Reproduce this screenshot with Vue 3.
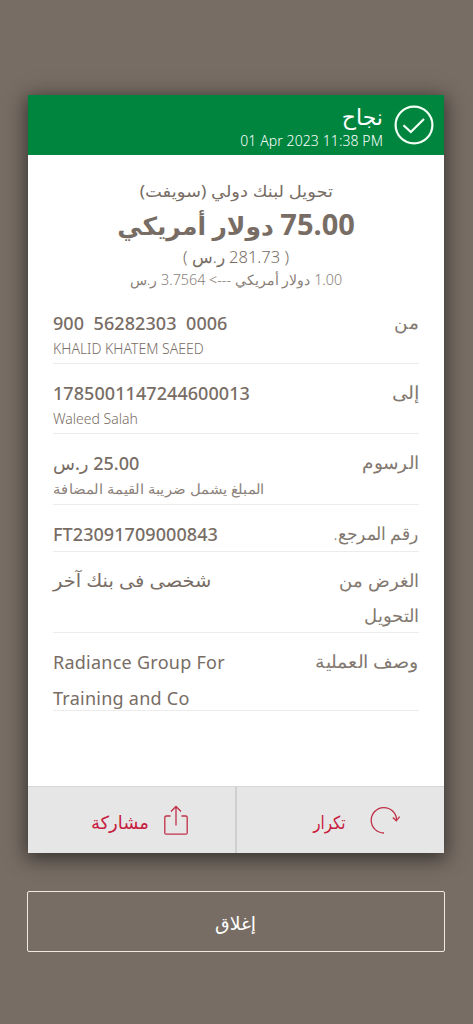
<script setup>
const rows = [
  { id: 'from', label: ['من'], value: ['900  56282303  0006'], note: 'KHALID KHATEM SAEED', ltr: true, noteLtr: true },
  { id: 'to', label: ['إلى'], value: ['1785001147244600013'], note: 'Waleed Salah', ltr: true, noteLtr: true },
  { id: 'fees', label: ['الرسوم'], value: ['25.00 ر.س'], note: 'المبلغ يشمل ضريبة القيمة المضافة' },
  { id: 'ref', label: ['رقم المرجع.'], value: ['FT23091709000843'], ltr: true },
  { id: 'purpose', label: ['الغرض من', 'التحويل'], value: ['شخصى فى بنك آخر'] },
  { id: 'desc', label: ['وصف العملية'], value: ['Radiance Group For', 'Training and Co'], ltr: true },
]
</script>

<template>
  <main class="screen" dir="rtl">
    <section class="card">
      <header class="head">
        <svg class="tick" viewBox="0 0 40 40">
          <circle cx="20" cy="20" r="18.4" />
          <path d="M9.5 20.3 16.8 27 30 14" />
        </svg>
        <div class="head-text">
          <div class="status"><span>نجاح</span></div>
          <div class="date" dir="ltr"><span>01 Apr 2023 11:38 PM</span></div>
        </div>
      </header>

      <div class="body">
        <div class="summary">
          <div class="kind"><span>تحويل لبنك دولي (سويفت)</span></div>
          <div class="amount"><span class="figure">75.00</span><span class="currency"> دولار أمريكي</span></div>
          <div class="local"><span>( 281.73 ر.س )</span></div>
          <div class="rate"><span>1.00 دولار أمريكي ---&gt; 3.7564 ر.س</span></div>
        </div>

        <div v-for="r in rows" :key="r.id" class="row" :class="r.id">
          <div class="label">
            <div v-for="l in r.label" :key="l"><span>{{ l }}</span></div>
          </div>
          <div class="data">
            <div v-for="v in r.value" :key="v" class="value" :dir="r.ltr ? 'ltr' : 'rtl'"><span>{{ v }}</span></div>
            <div v-if="r.note" class="note" :dir="r.noteLtr ? 'ltr' : 'rtl'"><span>{{ r.note }}</span></div>
          </div>
        </div>
      </div>

      <footer class="actions">
        <button class="action repeat">
          <svg class="icon-repeat" viewBox="0 0 32 32">
            <path d="M15 29A12.7 12.7 0 1 1 27.6 15.8" />
            <path d="M23.8 13.5 27.3 16.8 30.6 12.7" />
          </svg>
          <span>تكرار</span>
        </button>
        <button class="action share">
          <svg class="icon-share" viewBox="0 0 26 32">
            <path d="M7.5 12H3.2Q1.8 12 1.8 13.5V28.7Q1.8 30.2 3.2 30.2H22.8Q24.2 30.2 24.2 28.7V13.5Q24.2 12 22.8 12H18.5" />
            <path d="M13 21.5V2.5M8 7.5 13 2.5 18 7.5" />
          </svg>
          <span>مشاركة</span>
        </button>
      </footer>
    </section>

    <button class="close"><span>إغلاق</span></button>
  </main>
</template>

<style>
body { margin: 0; background: #786d64; }
</style>

<style scoped>
.screen {
  box-sizing: border-box;
  height: 1024px;
  padding: 95px 29px 0 28px;
  background: #786d64;
  color: #786d65;
  font-family: "Noto Sans", "DejaVu Sans", sans-serif;
  overflow: hidden;
}
span { display: inline-block; white-space: pre; }
button { margin: 0; padding: 0; font-family: inherit; }
.card {
  display: flex;
  flex-direction: column;
  height: 758px;
  background: #fff;
  box-shadow: 0 4px 18px 2px rgba(20, 20, 20, 0.65);
}
.head {
  display: flex;
  align-items: center;
  gap: 11px;
  height: 60px;
  box-sizing: border-box;
  padding-right: 10px;
  background: #00853f;
  color: #fff;
}
.tick { width: 40px; height: 40px; fill: none; stroke: #f2fff4; stroke-width: 2.2; }
.status { height: 29px; line-height: 33px; font-size: 22px; }
.date { height: 22px; line-height: 23px; font-size: 14px; font-weight: 350; letter-spacing: 0.1px; }
.body { flex: 1; padding: 0 25px; }
.summary { height: 139px; box-sizing: border-box; padding-top: 21px; text-align: center; }
.summary div { white-space: nowrap; }
.kind { height: 29px; line-height: 30px; font-size: 16px; }
.kind span { transform: scaleX(1.12); }
.amount { height: 40px; line-height: 38px; font-weight: 700; }
.figure { font-size: 29px; }
.currency { font-size: 25px; }
.local { height: 24px; line-height: 24px; font-size: 16.5px; font-weight: 350; }
.rate { height: 22px; line-height: 22px; font-size: 14.3px; font-weight: 350; color: #887e77; }
.row {
  display: flex;
  justify-content: space-between;
  box-sizing: border-box;
  height: 70px;
  padding-top: 11px;
  border-bottom: 1px solid #ececec;
}
.row.fees { height: 71px; }
.row.ref { height: 47px; }
.row.purpose { height: 81px; }
.row.desc { height: 78px; }
.label { font-size: 17.5px; line-height: 35px; font-weight: 300; color: #82786f; }
.label span { transform: scaleX(1.03); transform-origin: right; }
.to .label span { transform: scaleX(1.1); }
.ref .label span { transform: scaleX(0.95); }
.purpose .label span { transform: scaleX(1); }
.desc .label span { transform: scaleX(1.06); }
.data { text-align: left; }
.value { height: 35px; line-height: 36px; font-size: 18px; font-weight: 500; letter-spacing: 0.07px; }
.value[dir="rtl"] { letter-spacing: 0; }
.purpose .value { line-height: 35px; }
.purpose .value span { transform: scaleX(1.08); transform-origin: left; }
.desc .value { height: 36px; line-height: 36px; font-weight: 450; letter-spacing: 0.25px; }
.note { height: 18px; line-height: 18px; font-size: 14px; font-weight: 320; }
.fees .note { color: #8b827b; }
.fees .note span { transform: scaleX(1.06); transform-origin: left; }
.actions { display: flex; height: 67px; box-sizing: border-box; border-top: 1px solid #d6d6d6; background: #e6e6e6; }
.action {
  display: flex;
  align-items: center;
  width: 207px;
  border: 0;
  background: transparent;
  color: #c8203f;
  font-size: 18px;
}
.action span { padding-top: 3px; }
.repeat { width: 209px; border-left: 2px solid #cfcfcf; }
.repeat span { transform: scaleX(0.84); transform-origin: right; }
.action svg { fill: none; stroke: #c03048; stroke-width: 1.3; }
.icon-repeat { width: 32px; height: 32px; margin-right: 43px; margin-left: 23px; }
.icon-share { width: 26px; height: 32px; margin-right: 46px; margin-left: 14px; }
.close {
  display: block;
  box-sizing: border-box;
  width: 418px;
  height: 61px;
  margin: 38px -1px 0 0;
  border: 1.5px solid #efe9df;
  border-radius: 2px;
  background: transparent;
  color: #fff;
  font-size: 18px;
}
.close span { padding-top: 2px; transform: scaleX(1.05); }
</style>
